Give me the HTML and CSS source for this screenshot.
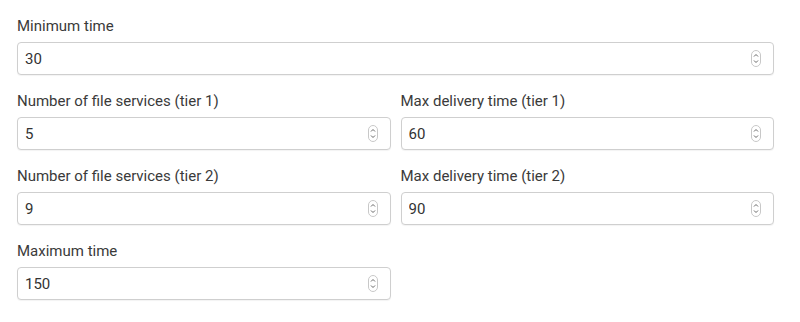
FILE: index.html
```html
<!DOCTYPE html>
<html lang="en">
<head>
    <meta charset="UTF-8">
    <meta name="viewport" content="width=device-width, initial-scale=1.0">
    <title>Delivery times</title>
    <link rel="stylesheet" href="styles.css">
</head>
<body>
    <form class="settings">
        <div class="field">
            <label class="field-label" for="minTime">Minimum time</label>
            <div class="number-input">
                <input id="minTime" type="text" value="30">
                <svg class="spinner" width="10" height="17" viewBox="0 0 10 17" aria-hidden="true">
                    <rect x="0.5" y="0.5" width="9" height="16" rx="4.5" fill="#fff" stroke="#c8c8c8"/>
                    <path d="M3 6.5 L5 4.5 L7 6.5" fill="none" stroke="#666" stroke-width="1"/>
                    <path d="M3 10.5 L5 12.5 L7 10.5" fill="none" stroke="#666" stroke-width="1"/>
                </svg>
            </div>
        </div>

        <div class="field-row">
            <div class="field">
                <label class="field-label" for="files1">Number of file services (tier 1)</label>
                <div class="number-input">
                    <input id="files1" type="text" value="5">
                    <svg class="spinner" width="10" height="17" viewBox="0 0 10 17" aria-hidden="true">
                        <rect x="0.5" y="0.5" width="9" height="16" rx="4.5" fill="#fff" stroke="#c8c8c8"/>
                        <path d="M3 6.5 L5 4.5 L7 6.5" fill="none" stroke="#666" stroke-width="1"/>
                        <path d="M3 10.5 L5 12.5 L7 10.5" fill="none" stroke="#666" stroke-width="1"/>
                    </svg>
                </div>
            </div>
            <div class="field">
                <label class="field-label" for="delivery1">Max delivery time (tier 1)</label>
                <div class="number-input">
                    <input id="delivery1" type="text" value="60">
                    <svg class="spinner" width="10" height="17" viewBox="0 0 10 17" aria-hidden="true">
                        <rect x="0.5" y="0.5" width="9" height="16" rx="4.5" fill="#fff" stroke="#c8c8c8"/>
                        <path d="M3 6.5 L5 4.5 L7 6.5" fill="none" stroke="#666" stroke-width="1"/>
                        <path d="M3 10.5 L5 12.5 L7 10.5" fill="none" stroke="#666" stroke-width="1"/>
                    </svg>
                </div>
            </div>
        </div>

        <div class="field-row">
            <div class="field">
                <label class="field-label" for="files2">Number of file services (tier 2)</label>
                <div class="number-input">
                    <input id="files2" type="text" value="9">
                    <svg class="spinner" width="10" height="17" viewBox="0 0 10 17" aria-hidden="true">
                        <rect x="0.5" y="0.5" width="9" height="16" rx="4.5" fill="#fff" stroke="#c8c8c8"/>
                        <path d="M3 6.5 L5 4.5 L7 6.5" fill="none" stroke="#666" stroke-width="1"/>
                        <path d="M3 10.5 L5 12.5 L7 10.5" fill="none" stroke="#666" stroke-width="1"/>
                    </svg>
                </div>
            </div>
            <div class="field">
                <label class="field-label" for="delivery2">Max delivery time (tier 2)</label>
                <div class="number-input">
                    <input id="delivery2" type="text" value="90">
                    <svg class="spinner" width="10" height="17" viewBox="0 0 10 17" aria-hidden="true">
                        <rect x="0.5" y="0.5" width="9" height="16" rx="4.5" fill="#fff" stroke="#c8c8c8"/>
                        <path d="M3 6.5 L5 4.5 L7 6.5" fill="none" stroke="#666" stroke-width="1"/>
                        <path d="M3 10.5 L5 12.5 L7 10.5" fill="none" stroke="#666" stroke-width="1"/>
                    </svg>
                </div>
            </div>
        </div>

        <div class="field-row">
            <div class="field">
                <label class="field-label" for="maxTime">Maximum time</label>
                <div class="number-input">
                    <input id="maxTime" type="text" value="150">
                    <svg class="spinner" width="10" height="17" viewBox="0 0 10 17" aria-hidden="true">
                        <rect x="0.5" y="0.5" width="9" height="16" rx="4.5" fill="#fff" stroke="#c8c8c8"/>
                        <path d="M3 6.5 L5 4.5 L7 6.5" fill="none" stroke="#666" stroke-width="1"/>
                        <path d="M3 10.5 L5 12.5 L7 10.5" fill="none" stroke="#666" stroke-width="1"/>
                    </svg>
                </div>
            </div>
            <div class="field"></div>
        </div>
    </form>
</body>
</html>
```

FILE: styles.css
```css
* {
    box-sizing: border-box;
}

body {
    margin: 0;
    padding: 16px 26px 0 17px;
    background-color: #fff;
    font-family: Roboto, "Liberation Sans", sans-serif;
    font-size: 15px;
    color: #333;
}

.settings {
    display: flex;
    flex-direction: column;
}

.field-row {
    display: grid;
    grid-template-columns: 1fr 1fr;
    column-gap: 10px;
}

.field {
    margin-bottom: 16px;
}

.field-label {
    display: block;
    line-height: 20px;
    margin-bottom: 6px;
    color: #3a3a3a;
}

.number-input {
    display: flex;
    align-items: center;
    height: 33px;
    padding: 0 12px 0 7px;
    border: 1px solid #cfcfcf;
    border-radius: 4px;
    background-color: #fff;
    box-shadow: 0 1px 1px rgba(0, 0, 0, 0.05);
}

.number-input input {
    flex: 1;
    min-width: 0;
    border: none;
    outline: none;
    padding: 0;
    font-family: inherit;
    font-size: 15px;
    color: #333;
    background: transparent;
}

.spinner {
    flex-shrink: 0;
}
```
